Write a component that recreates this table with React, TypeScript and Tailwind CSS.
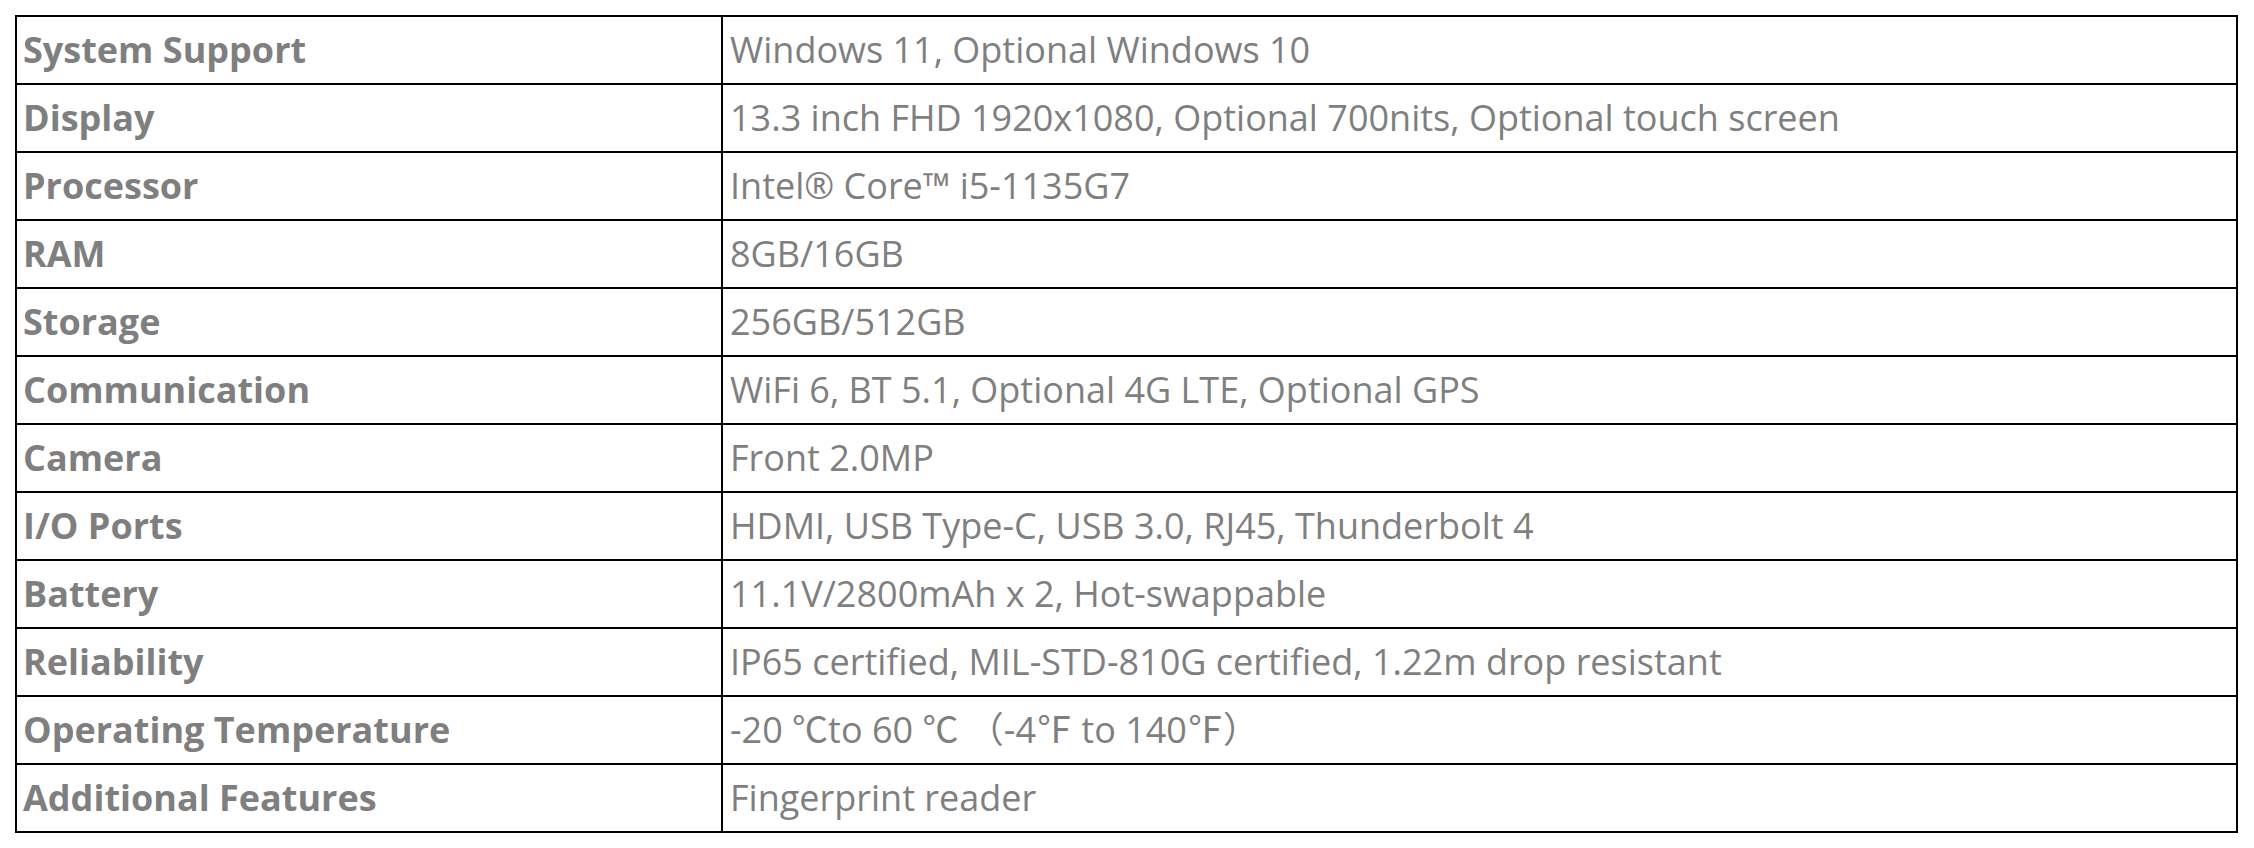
const specs = [
  { label: "System Support", value: "Windows 11, Optional Windows 10" },
  { label: "Display", value: "13.3 inch FHD 1920x1080, Optional 700nits, Optional touch screen" },
  { label: "Processor", value: "Intel® Core™ i5-1135G7" },
  { label: "RAM", value: "8GB/16GB" },
  { label: "Storage", value: "256GB/512GB" },
  { label: "Communication", value: "WiFi 6, BT 5.1, Optional 4G LTE, Optional GPS" },
  { label: "Camera", value: "Front 2.0MP" },
  { label: "I/O Ports", value: "HDMI, USB Type-C, USB 3.0, RJ45, Thunderbolt 4" },
  { label: "Battery", value: "11.1V/2800mAh x 2, Hot-swappable" },
  { label: "Reliability", value: "IP65 certified, MIL-STD-810G certified, 1.22m drop resistant" },
  { label: "Operating Temperature", value: "-20 ℃to 60 ℃ （-4℉ to 140℉）" },
  { label: "Additional Features", value: "Fingerprint reader" },
];

export default function App() {
  return (
    <div className="min-h-screen bg-white pt-[15px] pl-[15px]">
      <div
        className="grid w-[2223px] grid-cols-[706px_1515px] border-l-2 border-t-2 border-black text-[36px] text-[#7f7f7f]"
        style={{ fontFamily: '"Open Sans", "Noto Sans CJK SC", sans-serif' }}
      >
        {specs.map((row) => (
          <div key={row.label} className="contents">
            <div className="flex h-[68px] items-center border-b-2 border-r-2 border-black pl-[6px] font-bold">
              {row.label}
            </div>
            <div className="flex h-[68px] items-center border-b-2 border-r-2 border-black pl-[7px]">
              {row.value}
            </div>
          </div>
        ))}
      </div>
    </div>
  );
}
